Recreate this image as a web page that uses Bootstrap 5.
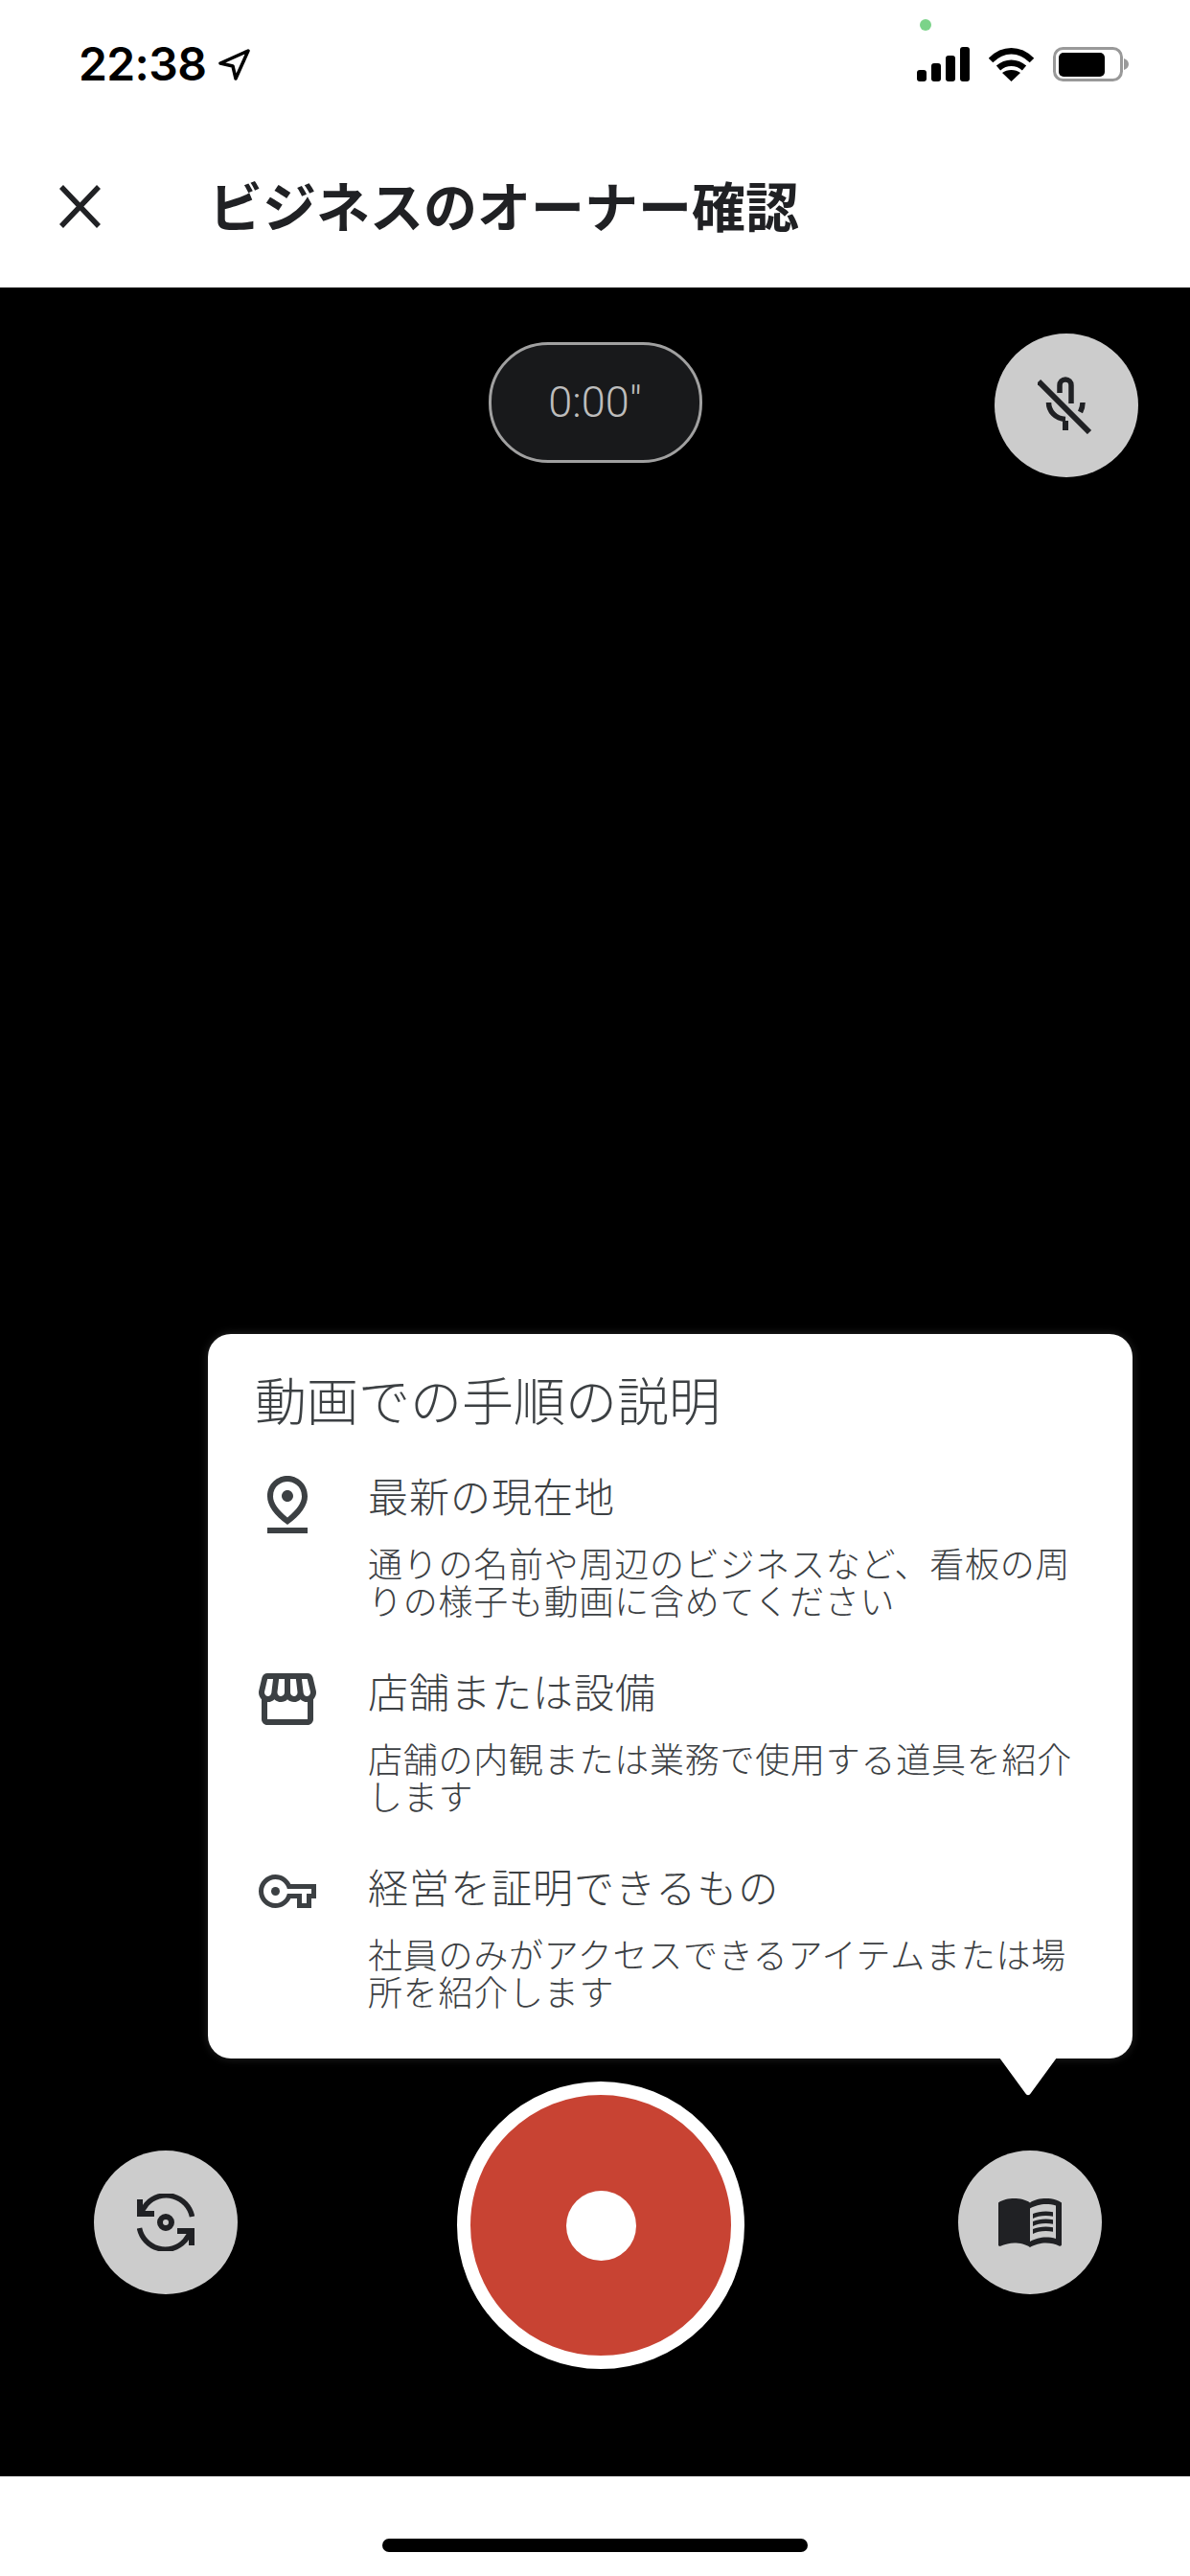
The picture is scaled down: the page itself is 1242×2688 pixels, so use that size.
<!DOCTYPE html>
<html lang="ja">
<head>
    <meta charset="UTF-8">
    <meta name="viewport" content="width=device-width, initial-scale=1.0">
    <title>ビジネスのオーナー確認</title>
    <link href="https://cdn.jsdelivr.net/npm/bootstrap@5.3.0/dist/css/bootstrap.min.css" rel="stylesheet">
    <style>
        html, body { height: 2688px; }
        body { font-family: "Noto Sans CJK JP", "Liberation Sans", sans-serif; color: #3c4043; background: #fff; }
        .status-row { height: 100px; padding: 0 64px 0 82px; position: relative; }
        .clock { font-family: Inter, "Liberation Sans", sans-serif; font-weight: 600; font-size: 48px; color: #000; line-height: 1; margin-top: 43px; letter-spacing: -0.6px; }
        .nav-arrow { margin: 51px 0 0 13px; }
        .status-icons { margin-top: 49px; gap: 20px; }
        .green-dot { position: absolute; left: 960px; top: 20px; width: 12px; height: 12px; border-radius: 50%; background: #7bd389; }
        .app-bar { height: 200px; padding: 30px 0 0 62px; }
        .app-title { font-size: 56px; font-weight: 700; color: #202124; margin: 0 0 5px 113px; line-height: 1; }
        .stage { height: 2284px; background: #000; }
        .top-row { display: grid; grid-template-columns: 1fr auto 1fr; padding: 48px 54px 0; }
        .timer-pill { margin-top: 9px; width: 223px; height: 126px; border-radius: 62px; border: 3px solid #a0a0a0; background: #18191b; color: #bdbdbd; font-family: Roboto, sans-serif; font-weight: 300; font-size: 45px; }
        .round-btn { width: 150px; height: 150px; border-radius: 50%; background: #cccccc; border: 0; padding: 0; }
        .mic-btn { justify-self: end; }
        .guide-card { margin: 0 60px 0 217px; height: 756px; border-radius: 24px; padding: 32px 48px 0 49px; box-shadow: 0 0 10px rgba(255,255,255,.15); }
        .guide-head { font-size: 54px; font-weight: 300; line-height: 72px; margin-bottom: 36px; }
        .guide-row { height: 204px; }
        .guide-ico { width: 118px; flex: none; }
        .ico-pin { padding: 8px 0 0 13px; }
        .ico-store { padding: 10px 0 0 4px; }
        .ico-key { padding: 16px 0 0 4px; }
        .guide-name { font-size: 42px; font-weight: 300; line-height: 56px; letter-spacing: 1px; margin-bottom: 23px; }
        .guide-text { font-size: 36px; font-weight: 300; line-height: 38.5px; letter-spacing: .75px; margin: 0; }
        .tail { position: absolute; left: 826px; bottom: -39px; }
        .controls { padding: 24px 0 112px 98px; }
        .side-btn { margin-top: 72px; }
        .rec-btn { width: 300px; height: 300px; border-radius: 50%; background: #c84333; border: 14px solid #fff; margin: 0 223px 0 229px; padding: 0; }
        .rec-dot { display: block; width: 73px; height: 73px; border-radius: 50%; background: #fff; }
        .home-zone { height: 104px; padding-top: 65px; }
        .home-bar { width: 444px; height: 14px; border-radius: 7px; background: #000; }
    </style>
</head>
<body class="d-flex flex-column">

<div class="status-row d-flex justify-content-between align-items-start">
    <div class="d-flex align-items-start">
        <span class="clock">22:38</span>
        <svg class="nav-arrow" width="33" height="33" viewBox="0 0 33 33"><path d="M31 2 2 15l13 3 3 13z" fill="none" stroke="#000" stroke-width="3.500" stroke-linejoin="round"/></svg>
    </div>
    <span class="green-dot"></span>
    <div class="status-icons d-flex align-items-center">
        <svg width="55" height="36" viewBox="0 0 55 36" fill="#000"><rect x="0" y="24" width="10" height="12" rx="3"/><rect x="15" y="17" width="10" height="19" rx="3"/><rect x="30" y="9" width="10" height="27" rx="3"/><rect x="45" y="0" width="10" height="36" rx="3"/></svg>
        <svg width="47" height="36" viewBox="0 0 47 36" fill="none" stroke="#000" stroke-width="6.500"><path d="M2 14c13-13 30-13 43 0"/><path d="M10 22c8-7 19-7 27 0"/><path d="M23.500 36 14 27c5-4 14-4 19 0z" fill="#000" stroke="none"/></svg>
        <svg width="79" height="36" viewBox="0 0 79 36"><rect x="1.500" y="1.500" width="70" height="33" rx="9" fill="none" stroke="#999" stroke-width="3"/><rect x="6" y="6" width="48" height="25" rx="5" fill="#000"/><path d="M74 12c3 1 5 3 5 6s-2 5-5 6z" fill="#999"/></svg>
    </div>
</div>

<nav class="app-bar d-flex align-items-center">
    <svg width="43" height="45" viewBox="0 0 43 45"><path d="M2 2l39 41M41 2 2 43" stroke="#202124" stroke-width="5.500" fill="none"/></svg>
    <h1 class="app-title">ビジネスのオーナー確認</h1>
</nav>

<main class="stage d-flex flex-column">
    <div class="top-row">
        <div></div>
        <div class="timer-pill d-flex align-items-center justify-content-center">0:00"</div>
        <button class="round-btn mic-btn d-flex align-items-center justify-content-center" type="button" aria-label="mic off">
            <svg width="60" height="60" viewBox="0 0 60 60" fill="none" stroke="#202124" stroke-width="5.500">
                <path d="M23 17V9a6 6 0 0 1 12 0V28"/>
                <path d="M11.500 27c0 9 7 17 17.500 17.500"/>
                <path d="M47 27c0 4-1 7-2.500 10"/>
                <path d="M29 46v10" stroke-width="6"/>
                <path d="M1 5l53 53" stroke-width="6"/>
            </svg>
        </button>
    </div>

    <div class="flex-grow-1"></div>

    <section class="card guide-card border-0 position-relative">
        <div class="guide-head">動画での手順の説明</div>

        <div class="guide-row d-flex">
            <div class="guide-ico ico-pin">
                <svg width="42" height="60" viewBox="5 2 14 20" fill="#3c4043"><path d="M12 4c1.930 0 5 1.400 5 5.150 0 2.160-1.720 4.670-5 7.320-3.280-2.650-5-5.170-5-7.320C7 5.400 10.070 4 12 4m0-2C8.730 2 5 4.460 5 9.150c0 3.120 2.330 6.410 7 9.850 4.670-3.440 7-6.730 7-9.850C19 4.460 15.270 2 12 2zm0 5c-1.100 0-2 .9-2 2s.9 2 2 2 2-.9 2-2-.9-2-2-2zM5 20h14v2H5v-2z"/></svg>
            </div>
            <div>
                <div class="guide-name">最新の現在地</div>
                <p class="guide-text">通りの名前や周辺のビジネスなど、看板の周りの様子も動画に含めてください</p>
            </div>
        </div>

        <div class="guide-row d-flex">
            <div class="guide-ico ico-store">
                <svg width="60" height="54" viewBox="2 3 20 18" fill="#3c4043"><path d="M21.900 8.890l-1.050-4.370c-.22-.9-1-1.520-1.910-1.520H5.050c-.9 0-1.690.63-1.900 1.520L2.100 8.890c-.24 1.020-.02 2.060.62 2.880.08.11.19.19.28.29V19c0 1.100.9 2 2 2h14c1.100 0 2-.9 2-2v-6.940c.09-.09.2-.18.28-.28.64-.82.87-1.870.62-2.890zm-2.990-3.900l1.050 4.370c.1.42.01.84-.25 1.170-.14.18-.44.47-.94.47-.61 0-1.140-.49-1.210-1.140L16.980 5l1.930-.01zM13 5h1.960l.54 4.520c.05.39-.07.78-.33 1.070-.22.26-.54.41-.95.41-.67 0-1.220-.59-1.220-1.310V5zM8.490 9.520L9.040 5H11v4.690c0 .72-.55 1.310-1.290 1.310-.34 0-.65-.15-.89-.41-.25-.29-.37-.68-.33-1.070zm-4.450-.16L5.050 5h1.970l-.58 4.860c-.08.65-.6 1.140-1.210 1.140-.49 0-.8-.29-.93-.47-.27-.32-.36-.75-.26-1.170zM5 19v-6.030c.08.01.15.03.23.03.87 0 1.660-.36 2.240-.95.6.6 1.400.95 2.310.95.87 0 1.650-.36 2.230-.93.59.57 1.390.93 2.290.93.84 0 1.640-.35 2.240-.95.58.59 1.370.95 2.240.95.08 0 .15-.02.23-.03V19H5z"/></svg>
            </div>
            <div>
                <div class="guide-name">店舗または設備</div>
                <p class="guide-text">店舗の内観または業務で使用する道具を紹介します</p>
            </div>
        </div>

        <div class="guide-row d-flex">
            <div class="guide-ico ico-key">
                <svg width="60" height="35" viewBox="0 5 24 14" fill="#3c4043"><path d="M22 19h-6v-4h-2.680c-1.140 2.420-3.600 4-6.320 4-3.860 0-7-3.140-7-7s3.140-7 7-7c2.720 0 5.170 1.580 6.320 4H24v6h-2v4zm-4-2h2v-4h2v-2H11.940l-.23-.67C11.010 8.340 9.110 7 7 7c-2.760 0-5 2.240-5 5s2.240 5 5 5c2.110 0 4.010-1.340 4.710-3.330l.23-.67H18v4z"/><circle cx="7" cy="12" r="1.800"/></svg>
            </div>
            <div>
                <div class="guide-name">経営を証明できるもの</div>
                <p class="guide-text">社員のみがアクセスできるアイテムまたは場所を紹介します</p>
            </div>
        </div>

        <svg class="tail" width="60" height="40" viewBox="0 0 60 40"><path d="M0 0H60L33 37c-2 3-4 3-6 0z" fill="#fff"/></svg>
    </section>

    <div class="controls d-flex align-items-start">
        <button class="round-btn side-btn d-flex align-items-center justify-content-center" type="button" aria-label="switch camera">
            <svg width="60" height="60" viewBox="0 0 60 60" fill="#202124">
                <g id="swap-half">
                    <path d="M57.500 24A27.500 27.500 0 0 0 10 11L3 21" fill="none" stroke="#202124" stroke-width="5.500"/>
                    <path d="M0 6H6V18H18V24H0z"/>
                </g>
                <use href="#swap-half" transform="rotate(180 30 30)"/>
                <circle cx="30" cy="30" r="6" fill="none" stroke="#202124" stroke-width="6"/>
            </svg>
        </button>
        <button class="rec-btn d-flex align-items-center justify-content-center" type="button" aria-label="record"><span class="rec-dot"></span></button>
        <button class="round-btn side-btn d-flex align-items-center justify-content-center" type="button" aria-label="guide">
            <svg width="66" height="51" viewBox="1 4.500 22 17" fill="#202124" fill-rule="evenodd"><path d="M21 5c-1.110-.35-2.330-.5-3.500-.5-1.950 0-4.050.4-5.500 1.500-1.450-1.100-3.550-1.500-5.500-1.500S2.450 4.900 1 6v14.650c0 .25.25.5.5.5.1 0 .15-.05.25-.05C3.100 20.450 5.050 20 6.500 20c1.950 0 4.050.4 5.500 1.500 1.350-.85 3.800-1.500 5.500-1.500 1.650 0 3.350.3 4.750 1.050.1.05.15.05.25.05.25 0 .5-.25.5-.5V6c-.6-.45-1.250-.75-2-1zm0 13.500c-1.100-.35-2.300-.5-3.500-.5-1.700 0-4.150.65-5.500 1.500V8c1.350-.85 3.800-1.500 5.500-1.500 1.200 0 2.400.15 3.500.5v11.500z"/><path d="M17.500 10.500c.88 0 1.730.09 2.500.26V9.240c-.79-.15-1.640-.24-2.500-.24-1.700 0-3.240.29-4.500.83v1.660c1.130-.64 2.700-.99 4.500-.99zM13 12.490v1.660c1.130-.64 2.700-.99 4.500-.99.88 0 1.730.09 2.500.26V11.900c-.79-.15-1.640-.24-2.500-.24-1.700 0-3.240.3-4.500.83zm4.500 1.840c-1.700 0-3.240.29-4.500.83v1.660c1.130-.64 2.700-.99 4.500-.99.88 0 1.730.09 2.500.26v-1.520c-.79-.16-1.640-.24-2.500-.24z"/></svg>
        </button>
    </div>
</main>

<div class="home-zone d-flex justify-content-center">
    <div class="home-bar"></div>
</div>

<script src="https://cdn.jsdelivr.net/npm/bootstrap@5.3.0/dist/js/bootstrap.bundle.min.js"></script>
</body>
</html>
